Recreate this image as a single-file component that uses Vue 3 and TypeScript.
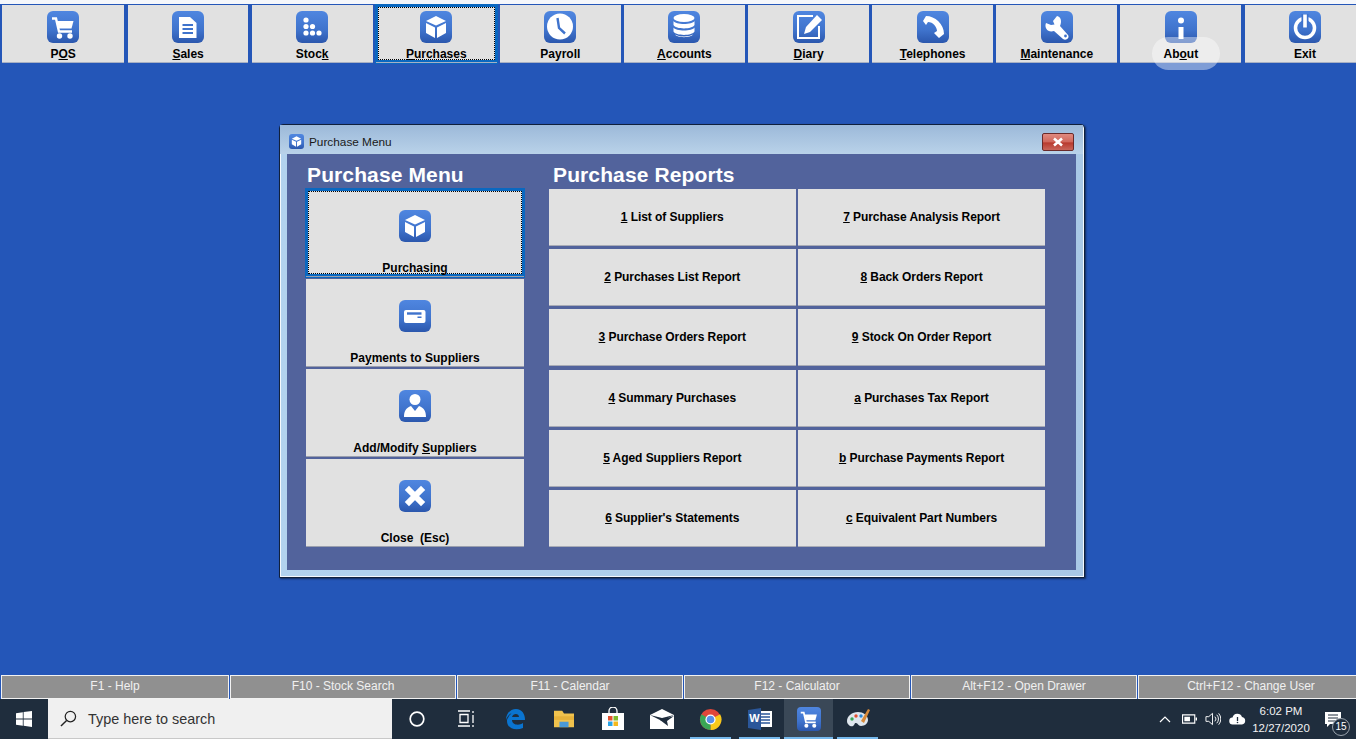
<script setup lang="ts">
// Purchase Menu screen of a POS back office, on a Windows 10 desktop.
// Labels use "&" to mark the mnemonic letter, same as the Win32 caption.

const glyphs: Record<string, string> = {
  cart: `<path d="M5 7.500h4l3 13h13" fill="none" stroke="#fff" stroke-width="2.4"/><path d="M10 10h16.500l-2 7.500H12z" fill="#fff"/><circle cx="12.500" cy="25" r="2.700" fill="#fff"/><circle cx="23" cy="25" r="2.700" fill="#fff"/>`,
  doc: `<path d="M7 6h11l6.500 6v15H7z" fill="#fff"/><path d="M10.500 14h10.500M10.500 18h10.500M10.500 22h10.500" stroke="#3f73cc" stroke-width="2"/>`,
  stock: `<g fill="#fff"><circle cx="10" cy="9" r="2.600"/><circle cx="10" cy="15.500" r="2.600"/><circle cx="16.500" cy="15.500" r="2.600"/><circle cx="10" cy="22" r="2.600"/><circle cx="16.500" cy="22" r="2.600"/><circle cx="23" cy="22" r="2.600"/></g>`,
  cube: `<g fill="#fff"><path d="M16 5l10 5-10 4.500L6 10z"/><path d="M6 12l9 4.500V27l-9-5z"/><path d="M26 12l-9 4.500V27l9-5z"/></g>`,
  clock: `<circle cx="16" cy="15.500" r="13" fill="#fff"/><path d="M13.500 7l1.500 10 6 5.500" fill="none" stroke="#3f73cc" stroke-width="2.4"/>`,
  db: `<g fill="#fff"><ellipse cx="16" cy="7" rx="10.500" ry="4"/><path d="M5.500 10c2 4 19 4 21 0v4c-2 4.500-19 4.500-21 0z"/><path d="M5.500 16.500c2 4 19 4 21 0v4c-2 4.500-19 4.500-21 0z"/><path d="M7 23.500c4 2.500 14 2.500 18 0-2 3.500-16 3.500-18 0z"/></g>`,
  diary: `<path d="M20 5H5v22h21V15" fill="none" stroke="#fff" stroke-width="2"/><path d="M11 23l2-7L24 4l5 5-12 12z" fill="#fff"/>`,
  phone: `<path d="M6 10l3-5c9 0 18 8 18 18l-5 4-5-5 3-2c0-4-4-9-9-9l-2 3z" fill="#fff"/>`,
  wrench: `<path d="M16 5l-4 5 1.500 3.500L10 14l-5-2c-2 5 2 10 8 8l9 8c3 2 7-1 5-4l-8-9c2-5 1-9-3-10z" fill="#fff"/><circle cx="24.500" cy="25" r="1.400" fill="#3f73cc"/>`,
  info: `<circle cx="16" cy="9.500" r="3" fill="#fff"/><rect x="13.500" y="16" width="5" height="12" fill="#fff"/>`,
  power: `<circle cx="16" cy="17" r="9.500" fill="none" stroke="#fff" stroke-width="3.500"/><rect x="12.500" y="3" width="7" height="14" fill="#3f73cc"/><rect x="14.200" y="3.500" width="3.600" height="13" fill="#fff"/>`,
  card: `<rect x="5" y="10" width="21.500" height="13" rx="2" fill="#fff"/><rect x="8" y="12.300" width="14.500" height="2.400" fill="#3f73cc"/><rect x="18.500" y="16.500" width="4" height="1.500" fill="#3f73cc"/>`,
  user: `<circle cx="16" cy="9.500" r="5.500" fill="#fff"/><path d="M5 27c0-6 2-9 7-11l4 5 4-5c5 2 7 5 7 11z" fill="#fff"/>`,
  close: `<path d="M10 10l12 12M22 10L10 22" stroke="#fff" stroke-width="6" stroke-linecap="square"/>`,
}

const topButtons = [
  { label: 'P&OS', icon: 'cart' },
  { label: '&Sales', icon: 'doc' },
  { label: 'Stoc&k', icon: 'stock' },
  { label: '&Purchases', icon: 'cube', focused: true },
  { label: 'Payroll', icon: 'clock' },
  { label: '&Accounts', icon: 'db' },
  { label: '&Diary', icon: 'diary' },
  { label: '&Telephones', icon: 'phone' },
  { label: '&Maintenance', icon: 'wrench' },
  { label: 'Ab&out', icon: 'info' },
  { label: 'Exit', icon: 'power' },
]

const menuButtons = [
  { label: 'Purchasing', icon: 'cube', focused: true },
  { label: 'Pa&yments to Suppliers', icon: 'card' },
  { label: 'Add/Modify &Suppliers', icon: 'user' },
  { label: 'Close  (Esc)', icon: 'close' },
]

const reports = [
  '&1 List of Suppliers',
  '&7 Purchase Analysis Report',
  '&2 Purchases List Report',
  '&8 Back Orders Report',
  '&3 Purchase Orders Report',
  '&9 Stock On Order Report',
  '&4 Summary Purchases',
  '&a Purchases Tax Report',
  '&5 Aged Suppliers Report',
  '&b Purchase Payments Report',
  '&6 Supplier\'s Statements',
  '&c Equivalent Part Numbers',
]

const fkeys = [
  'F1 - Help',
  'F10 - Stock Search',
  'F11 - Calendar',
  'F12 - Calculator',
  'Alt+F12 - Open Drawer',
  'Ctrl+F12 - Change User',
]

// "&" marks the next letter as underlined
function parts(label: string): [string, string, string] {
  const i = label.indexOf('&')
  if (i < 0) return [label, '', '']
  return [label.slice(0, i), label.charAt(i + 1), label.slice(i + 2)]
}
</script>

<template>
  <div class="screen">
    <nav class="topbar">
      <button
        v-for="b in topButtons"
        :key="b.label"
        type="button"
        class="top-btn"
        :class="{ focused: b.focused }"
      >
        <span class="tile"><svg viewBox="0 0 32 32" width="32" height="32" v-html="glyphs[b.icon]" /></span>
        <span class="top-label">{{ parts(b.label)[0] }}<u>{{ parts(b.label)[1] }}</u>{{ parts(b.label)[2] }}</span>
      </button>
      <div class="pill"></div>
    </nav>

    <main class="desk">
      <section class="dialog">
        <header class="titlebar">
          <span class="tile mini"><svg viewBox="0 0 32 32" width="15" height="15" v-html="glyphs.cube" /></span>
          <span class="title">Purchase Menu</span>
          <span class="close-x">
            <svg viewBox="0 0 14 10" width="14" height="10">
              <path d="M3 1.500l8 7M11 1.500l-8 7" stroke="#fff" stroke-width="2.600" />
            </svg>
          </span>
        </header>
        <div class="client">
          <div class="menu-col">
            <h2 class="heading">Purchase Menu</h2>
            <div class="menu-list">
              <button
                v-for="m in menuButtons"
                :key="m.label"
                type="button"
                class="menu-btn"
                :class="{ focused: m.focused }"
              >
                <span class="tile"><svg viewBox="0 0 32 32" width="32" height="32" v-html="glyphs[m.icon]" /></span>
                <span class="menu-label">{{ parts(m.label)[0] }}<u>{{ parts(m.label)[1] }}</u>{{ parts(m.label)[2] }}</span>
              </button>
            </div>
          </div>
          <div class="report-col">
            <h2 class="heading report-heading">Purchase Reports</h2>
            <div class="report-grid">
              <button v-for="r in reports" :key="r" type="button" class="report-btn">
                <u>{{ parts(r)[1] }}</u>{{ parts(r)[2] }}
              </button>
            </div>
          </div>
        </div>
      </section>
    </main>

    <div class="fkeys">
      <div v-for="f in fkeys" :key="f" class="fkey">{{ f }}</div>
    </div>

    <footer class="taskbar">
      <div class="start">
        <svg viewBox="0 0 16 16" width="16" height="16">
          <path d="M0 2.200l6.800-1v6.400H0zM7.600 1.100L16 0v7.600H7.600zM0 8.400h6.800v6.400l-6.800-1zM7.600 8.400H16V16l-8.400-1.200z" fill="#fff" />
        </svg>
      </div>
      <div class="search">
        <svg viewBox="0 0 18 18" width="17" height="17">
          <circle cx="11" cy="7" r="5.500" fill="none" stroke="#222" stroke-width="1.300" />
          <path d="M7 11l-6 6" stroke="#222" stroke-width="1.500" />
        </svg>
        <span>Type here to search</span>
      </div>
      <div class="task-icons">
        <span class="task-icon">
          <svg viewBox="0 0 18 18" width="18" height="18"><circle cx="9" cy="9" r="6.800" fill="none" stroke="#fff" stroke-width="1.700" /></svg>
        </span>
        <span class="task-icon">
          <svg viewBox="0 0 18 18" width="18" height="18"><path d="M1 1h12M1 16h12M3 4.500h8v8H3zM16 1v2M16 5v8M16 15v2" fill="none" stroke="#fff" stroke-width="1.300" /></svg>
        </span>
        <span class="task-icon">
          <svg viewBox="0 0 24 24" width="24" height="24"><path d="M3 13C3 6 8 2 13 2c6 0 9 5 9 11H9c0 5 7 6 11 3v5c-7 3-16 1-16-7 0-1 0-2 1-3 1-3 4-5 4-5-3 1-5 4-6 7zm6-3h7c0-4-6-4-7 0z" fill="#0a74d0" /></svg>
        </span>
        <span class="task-icon">
          <svg viewBox="0 0 24 22" width="22" height="20"><path d="M1 2h9l2 3h11v15H1z" fill="#f0c24d" /><path d="M1 8h22v4H1z" fill="#e6b23a" /><path d="M7 14h10v6H7z" fill="#4a9ad8" /></svg>
        </span>
        <span class="task-icon">
          <svg viewBox="0 0 24 24" width="24" height="24"><path d="M8 7V4a4 4 0 0 1 8 0v3" fill="none" stroke="#fff" stroke-width="1.300" /><path d="M1 6h22v17H1z" fill="#fff" /><path d="M7 9h4.500v4.500H7z" fill="#e2502f" /><path d="M12.500 9H17v4.500h-4.500z" fill="#7fba2c" /><path d="M7 14.500h4.500V19H7z" fill="#2aa4e8" /><path d="M12.500 14.500H17V19h-4.500z" fill="#f6b91d" /></svg>
        </span>
        <span class="task-icon">
          <svg viewBox="0 0 24 20" width="24" height="20"><path d="M0 6l12-6 12 6v14H0z" fill="#fff" /><path d="M0 6l12 6 12-6-12 3z" fill="#1f2d3d" /><path d="M10 11l14-4-7 5 1 5z" fill="#1f2d3d" /></svg>
        </span>
        <span class="task-icon running">
          <svg viewBox="0 0 24 24" width="23" height="23">
            <circle cx="12" cy="12" r="11" fill="#e0463a" />
            <path d="M12 12L22 6.500A11 11 0 0 1 12 23z" fill="#f8c91c" />
            <path d="M12 12L12 23A11 11 0 0 1 2.500 6.500z" fill="#3aa655" />
            <circle cx="12" cy="12" r="5.300" fill="#fff" />
            <circle cx="12" cy="12" r="4" fill="#5a8fe8" />
          </svg>
        </span>
        <span class="task-icon running">
          <svg viewBox="0 0 24 22" width="24" height="22">
            <path d="M10 3h14v16H10z" fill="#fff" />
            <path d="M13 6h9M13 9h9M13 12h9M13 15h9" stroke="#2b579a" stroke-width="1.300" />
            <path d="M0 2l13-2v22L0 20z" fill="#2b579a" />
            <text x="6.500" y="14" text-anchor="middle" class="word-w">W</text>
          </svg>
        </span>
        <span class="task-icon running active">
          <span class="tile small"><svg viewBox="0 0 32 32" width="24" height="24" v-html="glyphs.cart" /></span>
        </span>
        <span class="task-icon running">
          <svg viewBox="0 0 24 24" width="24" height="24">
            <path d="M12 5C6 5 1 9 1 14c0 4 4 6 6 5 2-1 1-3 3-3s2 3 5 3c4 0 7-3 7-6 0-5-5-8-10-8z" fill="#dfe6ee" />
            <circle cx="6" cy="12" r="1.700" fill="#3aa655" />
            <circle cx="10" cy="9" r="1.700" fill="#e2502f" />
            <circle cx="15" cy="9" r="1.700" fill="#2a88d8" />
            <path d="M15 14L22 2l2 1-6 13z" fill="#d88a3a" />
          </svg>
        </span>
      </div>
      <div class="tray">
        <svg class="chevron" viewBox="0 0 12 8" width="12" height="8"><path d="M1 7l5-5 5 5" fill="none" stroke="#fff" stroke-width="1.200" /></svg>
        <svg viewBox="0 0 16 10" width="15" height="10"><path d="M.6.600h13v8.800H.6z" fill="none" stroke="#fff" stroke-width="1.200" /><path d="M2.500 2.500h6v5h-6zM14.500 3.500H16v3h-1.500z" fill="#fff" /></svg>
        <svg viewBox="0 0 17 14" width="16" height="14"><path d="M1 4.500h3L8 1v12L4 9.500H1zM10.500 4.500a3.500 3.500 0 0 1 0 5M12.500 2.500a6.500 6.500 0 0 1 0 9M14.500 1a9 9 0 0 1 0 12" fill="none" stroke="#fff" stroke-width="1" /></svg>
        <svg viewBox="0 0 17 12" width="17" height="12"><path d="M4 11.500a3.500 3.500 0 0 1-.500-7A5 5 0 0 1 13 4a3.800 3.800 0 0 1 0 7.500z" fill="#fff" /><path d="M8.500 4v4" stroke="#1f2d3d" stroke-width="1.300" /><circle cx="8.500" cy="9.500" r=".8" fill="#1f2d3d" /></svg>
      </div>
      <div class="clock">
        <span>6:02 PM</span>
        <span>12/27/2020</span>
      </div>
      <div class="notify">
        <svg viewBox="0 0 16 15" width="16" height="15"><path d="M0 0h16v12H5l-3 3v-3H0z" fill="#fff" /><path d="M3 3h10M3 6h10M3 9h7" stroke="#1f2d3d" stroke-width="1" /></svg>
        <span class="badge">15</span>
      </div>
    </footer>
  </div>
</template>

<style scoped>
.screen {
  width: 1356px;
  height: 739px;
  display: flex;
  flex-direction: column;
  overflow: hidden;
  background: #2456b8;
  font-family: "Liberation Sans", Arial, sans-serif;
}
button {
  font-family: inherit;
  color: #000;
  border: 0;
  padding: 0;
  background: #e1e1e1;
}

.topbar {
  position: relative;
  display: grid;
  grid-template-columns: repeat(11, 120.8px);
  column-gap: 3.3px;
  height: 64px;
  padding: 5px 0 1px 3.6px;
  box-sizing: border-box;
  border-top: 4px solid #f5f7fb;
  box-shadow: inset 0 1px 0 #2456b8;
}
.top-btn {
  position: relative;
  display: flex;
  flex-direction: column;
  align-items: center;
  height: 58px;
  margin-top: -4px;
  padding-top: 6px;
  border-bottom: 1px solid #a7b0c4;
  box-sizing: border-box;
}
.top-btn:first-child {
  margin-left: -1.6px;
}
.top-label {
  position: relative;
  z-index: 2;
  margin-top: 4px;
  font-size: 12px;
  font-weight: 700;
  line-height: 14px;
  white-space: pre;
}
.top-btn.focused,
.menu-btn.focused {
  box-shadow: 0 0 0 1px #0a68c0, inset 0 0 0 2px #0a68c0;
}
.top-btn.focused::after,
.menu-btn.focused::after {
  content: "";
  position: absolute;
  inset: 2px;
  border: 1px dotted #000;
}

.tile {
  display: flex;
  align-items: center;
  justify-content: center;
  width: 32px;
  height: 32px;
  flex: none;
  border-radius: 6px;
  background: linear-gradient(#4f86e0 0%, #3f73cc 60%, #2b57ad 100%);
}
.tile.mini {
  width: 15px;
  height: 15px;
  border-radius: 3px;
}
.tile.small {
  width: 24px;
  height: 24px;
  border-radius: 4px;
}

.pill {
  position: absolute;
  left: 1152px;
  top: 33px;
  width: 68px;
  height: 33px;
  border-radius: 17px;
  background: rgba(255, 255, 255, 0.42);
}

.desk {
  flex: 1;
  min-height: 0;
  padding: 60px 0 0 279px;
}
.dialog {
  width: 806px;
  height: 454px;
  box-sizing: border-box;
  display: flex;
  flex-direction: column;
  padding: 0 8px 7px 7px;
  border: 1px solid #10203c;
  border-radius: 4px 4px 0 0;
  box-shadow: inset 0 0 0 1px #f4f8fc, 1px 1px 2px rgba(0, 0, 0, 0.5);
  background: linear-gradient(90deg, #b2d2ee, #a9c8e6);
}
.titlebar {
  display: flex;
  align-items: center;
  gap: 5px;
  height: 29px;
  flex: none;
  box-sizing: border-box;
  margin: 0 -7px 0 -7px;
  padding: 4px 9px 0 9px;
  background: linear-gradient(#9cb9d9, #b9d2e9);
}
.title {
  flex: 1;
  font-size: 11.8px;
  color: #1a1a1a;
}
.close-x {
  display: flex;
  align-items: center;
  justify-content: center;
  width: 32px;
  height: 18px;
  box-sizing: border-box;
  border: 1px solid #6a2a2a;
  border-radius: 2px;
  background: linear-gradient(#e08a80 0%, #d0675c 50%, #b83a2e 55%, #c9655a 100%);
}

.client {
  flex: 1;
  display: flex;
  padding: 8px 0 0 19px;
  background: #52639c;
}
.menu-col {
  width: 218px;
  margin-right: 25px;
}
.report-col {
  width: 496px;
}
.heading {
  margin: 0;
  height: 27px;
  font-size: 21px;
  font-weight: 700;
  line-height: 26px;
  letter-spacing: 0.12px;
  color: #fff;
  white-space: nowrap;
  padding-left: 1px;
}
.report-heading {
  padding-left: 4px;
}
.menu-list {
  display: grid;
  grid-auto-rows: 88px;
  row-gap: 2px;
}
.menu-btn {
  position: relative;
  display: flex;
  flex-direction: column;
  align-items: center;
  padding-top: 21px;
  border-bottom: 1px solid #9a9fae;
  box-sizing: border-box;
}
.menu-label {
  margin-top: 19px;
  font-size: 12px;
  font-weight: 700;
  line-height: 14px;
  white-space: pre;
}
.report-grid {
  display: grid;
  grid-template-columns: 246.5px 247px;
  grid-auto-rows: 57px;
  gap: 3.2px 2.5px;
}
.report-btn {
  font-size: 12px;
  font-weight: 700;
  letter-spacing: -0.06px;
  text-align: center;
  border-bottom: 1px solid #a8abb6;
}

.fkeys {
  display: grid;
  grid-template-columns: repeat(6, 226px);
  column-gap: 1px;
  height: 24px;
  padding: 0 0 0 3px;
  box-sizing: border-box;
}
.fkey {
  display: flex;
  align-items: center;
  justify-content: center;
  padding-bottom: 3px;
  background: #909090;
  border: 1px solid #f2f2f2;
  color: #f0f0f0;
  font-size: 12px;
}
.fkey:first-child {
  margin-left: -2px;
}

.taskbar {
  display: flex;
  align-items: center;
  height: 40px;
  flex: none;
  background: #1f2d3d;
  color: #fff;
}
.start {
  display: flex;
  justify-content: center;
  width: 48px;
}
.search {
  display: flex;
  align-items: center;
  gap: 11px;
  width: 344px;
  height: 40px;
  padding-left: 12px;
  box-sizing: border-box;
  background: #f0f0f0;
  border-bottom: 1px solid #c8c8c8;
  color: #333;
  font-size: 14.4px;
}
.task-icons {
  display: flex;
}
.task-icon {
  position: relative;
  display: flex;
  align-items: center;
  justify-content: center;
  width: 49px;
  height: 40px;
}
.task-icon.running::after {
  content: "";
  position: absolute;
  left: 4px;
  right: 4px;
  bottom: 0;
  height: 2px;
  background: #76b9ed;
}
.task-icon.active {
  background: #3a4857;
}
.task-icon.active::after {
  left: 0;
  right: 0;
}
.word-w {
  font-size: 11px;
  font-weight: 700;
  fill: #fff;
}
.tray {
  display: flex;
  align-items: center;
  gap: 8px;
  margin-left: auto;
}
.chevron {
  margin-right: 3px;
}
.clock {
  display: flex;
  flex-direction: column;
  align-items: center;
  width: 64px;
  margin-left: 3px;
  padding-top: 2px;
  font-size: 11.5px;
  line-height: 17px;
  color: #f2f2f2;
}
.notify {
  position: relative;
  display: flex;
  justify-content: center;
  width: 40px;
  margin-right: 3px;
}
.badge {
  position: absolute;
  left: 19px;
  top: 6px;
  width: 18px;
  height: 18px;
  box-sizing: border-box;
  border-radius: 50%;
  border: 1px solid #9aa3ad;
  background: #1f2d3d;
  text-align: center;
  font-size: 10px;
  line-height: 16px;
}
</style>
